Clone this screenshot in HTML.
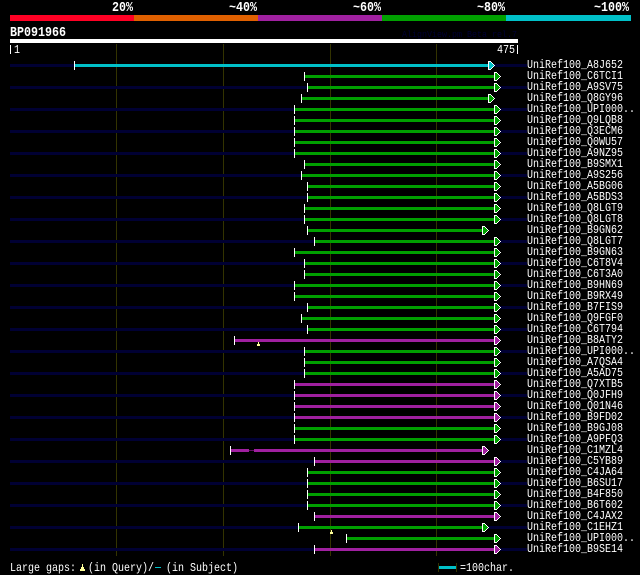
<!DOCTYPE html>
<html><head><meta charset="utf-8"><style>
html,body{margin:0;padding:0;background:#000;width:640px;height:575px;overflow:hidden}
svg{display:block}
text{font-family:"Liberation Mono","DejaVu Sans Mono",monospace;font-size:12px;fill:#fff}
.h{font-size:13.5px;font-weight:bold}
.g{fill:#00a000}.p{fill:#a020a0}.c{fill:#00c0c8}.b{fill:#000033}.o{fill:#333300}.w{fill:#fff}.y{fill:#ffff99}
</style></head><body>
<svg width="640" height="575" viewBox="0 0 640 575" shape-rendering="crispEdges">
<defs>
<g id="as" fill="#fff"><rect x="0" y="-4" width="1" height="9"/><rect x="1" y="-4" width="1" height="9"/><rect x="2" y="-4" width="1" height="9"/><rect x="3" y="-3" width="1" height="7"/><rect x="4" y="-2" width="1" height="5"/><rect x="5" y="-1" width="1" height="3"/><rect x="6" y="0" width="1" height="1"/></g>
<g id="ai"><rect x="1" y="-3" width="1" height="7"/><rect x="2" y="-3" width="1" height="7"/><rect x="3" y="-2" width="1" height="5"/><rect x="4" y="-1" width="1" height="3"/><rect x="5" y="0" width="1" height="1"/></g>
<g id="ag"><use href="#as"/><use href="#ai" fill="#00a000"/></g>
<g id="ap"><use href="#as"/><use href="#ai" fill="#a020a0"/></g>
<g id="ac"><use href="#as"/><use href="#ai" fill="#00c0c8"/></g>
</defs>
<rect x="0" y="0" width="640" height="575" fill="#000"/>
<rect x="10" y="15" width="124" height="6" fill="#ff0024"/>
<rect x="134" y="15" width="124" height="6" fill="#e06000"/>
<rect x="258" y="15" width="124" height="6" fill="#a020a0"/>
<rect x="382" y="15" width="124" height="6" fill="#00a000"/>
<rect x="506" y="15" width="125" height="6" fill="#00c0c8"/>
<text class="h" x="112" y="11" textLength="21" lengthAdjust="spacingAndGlyphs">20%</text>
<text class="h" x="229" y="11" textLength="28" lengthAdjust="spacingAndGlyphs">~40%</text>
<text class="h" x="353" y="11" textLength="28" lengthAdjust="spacingAndGlyphs">~60%</text>
<text class="h" x="477" y="11" textLength="28" lengthAdjust="spacingAndGlyphs">~80%</text>
<text class="h" x="594" y="11" textLength="35" lengthAdjust="spacingAndGlyphs">~100%</text>
<text class="h" x="10" y="36" textLength="56" lengthAdjust="spacingAndGlyphs">BP091966</text>
<text x="402" y="37" style="fill:#000033;font-size:9.5px" textLength="115" lengthAdjust="spacingAndGlyphs">AlignView.pm Beta rel.7</text>
<rect x="10" y="39" width="508" height="4" class="w"/>
<rect x="10" y="45" width="1" height="9" class="w"/>
<rect x="517" y="45" width="1" height="9" class="w"/>
<text x="14" y="53" textLength="6" lengthAdjust="spacingAndGlyphs">1</text>
<text x="497" y="53" textLength="18" lengthAdjust="spacingAndGlyphs">475</text>
<rect x="116" y="44" width="1" height="512" class="o"/>
<rect x="223" y="44" width="1" height="512" class="o"/>
<rect x="330" y="44" width="1" height="512" class="o"/>
<rect x="436" y="44" width="1" height="512" class="o"/>

<rect x="10" y="64" width="517" height="3" class="b"/>
<rect x="10" y="86" width="517" height="3" class="b"/>
<rect x="10" y="108" width="517" height="3" class="b"/>
<rect x="10" y="130" width="517" height="3" class="b"/>
<rect x="10" y="152" width="517" height="3" class="b"/>
<rect x="10" y="174" width="517" height="3" class="b"/>
<rect x="10" y="196" width="517" height="3" class="b"/>
<rect x="10" y="218" width="517" height="3" class="b"/>
<rect x="10" y="240" width="517" height="3" class="b"/>
<rect x="10" y="262" width="517" height="3" class="b"/>
<rect x="10" y="284" width="517" height="3" class="b"/>
<rect x="10" y="306" width="517" height="3" class="b"/>
<rect x="10" y="328" width="517" height="3" class="b"/>
<rect x="10" y="350" width="517" height="3" class="b"/>
<rect x="10" y="372" width="517" height="3" class="b"/>
<rect x="10" y="394" width="517" height="3" class="b"/>
<rect x="10" y="416" width="517" height="3" class="b"/>
<rect x="10" y="438" width="517" height="3" class="b"/>
<rect x="10" y="460" width="517" height="3" class="b"/>
<rect x="10" y="482" width="517" height="3" class="b"/>
<rect x="10" y="504" width="517" height="3" class="b"/>
<rect x="10" y="526" width="517" height="3" class="b"/>
<rect x="10" y="548" width="517" height="3" class="b"/>

<rect x="74" y="64" width="414" height="3" class="c"/><rect x="74" y="61" width="1" height="9" class="w"/><use href="#ac" x="488" y="65"/>
<rect x="304" y="75" width="190" height="3" class="g"/><rect x="304" y="72" width="1" height="9" class="w"/><use href="#ag" x="494" y="76"/>
<rect x="307" y="86" width="187" height="3" class="g"/><rect x="307" y="83" width="1" height="9" class="w"/><use href="#ag" x="494" y="87"/>
<rect x="301" y="97" width="187" height="3" class="g"/><rect x="301" y="94" width="1" height="9" class="w"/><use href="#ag" x="488" y="98"/>
<rect x="294" y="108" width="200" height="3" class="g"/><rect x="294" y="105" width="1" height="9" class="w"/><use href="#ag" x="494" y="109"/>
<rect x="294" y="119" width="200" height="3" class="g"/><rect x="294" y="116" width="1" height="9" class="w"/><use href="#ag" x="494" y="120"/>
<rect x="294" y="130" width="200" height="3" class="g"/><rect x="294" y="127" width="1" height="9" class="w"/><use href="#ag" x="494" y="131"/>
<rect x="294" y="141" width="200" height="3" class="g"/><rect x="294" y="138" width="1" height="9" class="w"/><use href="#ag" x="494" y="142"/>
<rect x="294" y="152" width="200" height="3" class="g"/><rect x="294" y="149" width="1" height="9" class="w"/><use href="#ag" x="494" y="153"/>
<rect x="304" y="163" width="190" height="3" class="g"/><rect x="304" y="160" width="1" height="9" class="w"/><use href="#ag" x="494" y="164"/>
<rect x="301" y="174" width="193" height="3" class="g"/><rect x="301" y="171" width="1" height="9" class="w"/><use href="#ag" x="494" y="175"/>
<rect x="307" y="185" width="187" height="3" class="g"/><rect x="307" y="182" width="1" height="9" class="w"/><use href="#ag" x="494" y="186"/>
<rect x="307" y="196" width="187" height="3" class="g"/><rect x="307" y="193" width="1" height="9" class="w"/><use href="#ag" x="494" y="197"/>
<rect x="304" y="207" width="190" height="3" class="g"/><rect x="304" y="204" width="1" height="9" class="w"/><use href="#ag" x="494" y="208"/>
<rect x="304" y="218" width="190" height="3" class="g"/><rect x="304" y="215" width="1" height="9" class="w"/><use href="#ag" x="494" y="219"/>
<rect x="307" y="229" width="175" height="3" class="g"/><rect x="307" y="226" width="1" height="9" class="w"/><use href="#ag" x="482" y="230"/>
<rect x="314" y="240" width="180" height="3" class="g"/><rect x="314" y="237" width="1" height="9" class="w"/><use href="#ag" x="494" y="241"/>
<rect x="294" y="251" width="200" height="3" class="g"/><rect x="294" y="248" width="1" height="9" class="w"/><use href="#ag" x="494" y="252"/>
<rect x="304" y="262" width="190" height="3" class="g"/><rect x="304" y="259" width="1" height="9" class="w"/><use href="#ag" x="494" y="263"/>
<rect x="304" y="273" width="190" height="3" class="g"/><rect x="304" y="270" width="1" height="9" class="w"/><use href="#ag" x="494" y="274"/>
<rect x="294" y="284" width="200" height="3" class="g"/><rect x="294" y="281" width="1" height="9" class="w"/><use href="#ag" x="494" y="285"/>
<rect x="294" y="295" width="200" height="3" class="g"/><rect x="294" y="292" width="1" height="9" class="w"/><use href="#ag" x="494" y="296"/>
<rect x="307" y="306" width="187" height="3" class="g"/><rect x="307" y="303" width="1" height="9" class="w"/><use href="#ag" x="494" y="307"/>
<rect x="301" y="317" width="193" height="3" class="g"/><rect x="301" y="314" width="1" height="9" class="w"/><use href="#ag" x="494" y="318"/>
<rect x="307" y="328" width="187" height="3" class="g"/><rect x="307" y="325" width="1" height="9" class="w"/><use href="#ag" x="494" y="329"/>
<rect x="234" y="339" width="260" height="3" class="p"/><rect x="234" y="336" width="1" height="9" class="w"/><use href="#ap" x="494" y="340"/>
<rect x="258" y="342" width="1" height="2" class="y"/><rect x="257" y="344" width="3" height="2" class="y"/>
<rect x="304" y="350" width="190" height="3" class="g"/><rect x="304" y="347" width="1" height="9" class="w"/><use href="#ag" x="494" y="351"/>
<rect x="304" y="361" width="190" height="3" class="g"/><rect x="304" y="358" width="1" height="9" class="w"/><use href="#ag" x="494" y="362"/>
<rect x="304" y="372" width="190" height="3" class="g"/><rect x="304" y="369" width="1" height="9" class="w"/><use href="#ag" x="494" y="373"/>
<rect x="294" y="383" width="200" height="3" class="p"/><rect x="294" y="380" width="1" height="9" class="w"/><use href="#ap" x="494" y="384"/>
<rect x="294" y="394" width="200" height="3" class="p"/><rect x="294" y="391" width="1" height="9" class="w"/><use href="#ap" x="494" y="395"/>
<rect x="294" y="405" width="200" height="3" class="p"/><rect x="294" y="402" width="1" height="9" class="w"/><use href="#ap" x="494" y="406"/>
<rect x="294" y="416" width="200" height="3" class="p"/><rect x="294" y="413" width="1" height="9" class="w"/><use href="#ap" x="494" y="417"/>
<rect x="294" y="427" width="200" height="3" class="g"/><rect x="294" y="424" width="1" height="9" class="w"/><use href="#ag" x="494" y="428"/>
<rect x="294" y="438" width="200" height="3" class="g"/><rect x="294" y="435" width="1" height="9" class="w"/><use href="#ag" x="494" y="439"/>
<rect x="230" y="449" width="19" height="3" class="p"/><rect x="249" y="450" width="5" height="1" fill="#601060"/><rect x="254" y="449" width="228" height="3" class="p"/><rect x="230" y="446" width="1" height="9" class="w"/><use href="#ap" x="482" y="450"/>
<rect x="314" y="460" width="180" height="3" class="p"/><rect x="314" y="457" width="1" height="9" class="w"/><use href="#ap" x="494" y="461"/>
<rect x="307" y="471" width="187" height="3" class="g"/><rect x="307" y="468" width="1" height="9" class="w"/><use href="#ag" x="494" y="472"/>
<rect x="307" y="482" width="187" height="3" class="g"/><rect x="307" y="479" width="1" height="9" class="w"/><use href="#ag" x="494" y="483"/>
<rect x="307" y="493" width="187" height="3" class="g"/><rect x="307" y="490" width="1" height="9" class="w"/><use href="#ag" x="494" y="494"/>
<rect x="307" y="504" width="187" height="3" class="g"/><rect x="307" y="501" width="1" height="9" class="w"/><use href="#ag" x="494" y="505"/>
<rect x="314" y="515" width="180" height="3" class="p"/><rect x="314" y="512" width="1" height="9" class="w"/><use href="#ap" x="494" y="516"/>
<rect x="298" y="526" width="184" height="3" class="g"/><rect x="298" y="523" width="1" height="9" class="w"/><use href="#ag" x="482" y="527"/>
<rect x="331" y="530" width="1" height="2" class="y"/><rect x="330" y="532" width="3" height="2" class="y"/>
<rect x="346" y="537" width="148" height="3" class="g"/><rect x="346" y="534" width="1" height="9" class="w"/><use href="#ag" x="494" y="538"/>
<rect x="314" y="548" width="180" height="3" class="p"/><rect x="314" y="545" width="1" height="9" class="w"/><use href="#ap" x="494" y="549"/>

<text x="527" y="68" textLength="96" lengthAdjust="spacingAndGlyphs">UniRef100_A8J652</text>
<text x="527" y="79" textLength="96" lengthAdjust="spacingAndGlyphs">UniRef100_C6TCI1</text>
<text x="527" y="90" textLength="96" lengthAdjust="spacingAndGlyphs">UniRef100_A9SV75</text>
<text x="527" y="101" textLength="96" lengthAdjust="spacingAndGlyphs">UniRef100_Q8GY96</text>
<text x="527" y="112" textLength="108" lengthAdjust="spacingAndGlyphs">UniRef100_UPI000..</text>
<text x="527" y="123" textLength="96" lengthAdjust="spacingAndGlyphs">UniRef100_Q9LQB8</text>
<text x="527" y="134" textLength="96" lengthAdjust="spacingAndGlyphs">UniRef100_Q3ECM6</text>
<text x="527" y="145" textLength="96" lengthAdjust="spacingAndGlyphs">UniRef100_Q0WU57</text>
<text x="527" y="156" textLength="96" lengthAdjust="spacingAndGlyphs">UniRef100_A9NZ95</text>
<text x="527" y="167" textLength="96" lengthAdjust="spacingAndGlyphs">UniRef100_B9SMX1</text>
<text x="527" y="178" textLength="96" lengthAdjust="spacingAndGlyphs">UniRef100_A9S256</text>
<text x="527" y="189" textLength="96" lengthAdjust="spacingAndGlyphs">UniRef100_A5BG06</text>
<text x="527" y="200" textLength="96" lengthAdjust="spacingAndGlyphs">UniRef100_A5BDS3</text>
<text x="527" y="211" textLength="96" lengthAdjust="spacingAndGlyphs">UniRef100_Q8LGT9</text>
<text x="527" y="222" textLength="96" lengthAdjust="spacingAndGlyphs">UniRef100_Q8LGT8</text>
<text x="527" y="233" textLength="96" lengthAdjust="spacingAndGlyphs">UniRef100_B9GN62</text>
<text x="527" y="244" textLength="96" lengthAdjust="spacingAndGlyphs">UniRef100_Q8LGT7</text>
<text x="527" y="255" textLength="96" lengthAdjust="spacingAndGlyphs">UniRef100_B9GN63</text>
<text x="527" y="266" textLength="96" lengthAdjust="spacingAndGlyphs">UniRef100_C6T8V4</text>
<text x="527" y="277" textLength="96" lengthAdjust="spacingAndGlyphs">UniRef100_C6T3A0</text>
<text x="527" y="288" textLength="96" lengthAdjust="spacingAndGlyphs">UniRef100_B9HN69</text>
<text x="527" y="299" textLength="96" lengthAdjust="spacingAndGlyphs">UniRef100_B9RX49</text>
<text x="527" y="310" textLength="96" lengthAdjust="spacingAndGlyphs">UniRef100_B7FIS9</text>
<text x="527" y="321" textLength="96" lengthAdjust="spacingAndGlyphs">UniRef100_Q9FGF0</text>
<text x="527" y="332" textLength="96" lengthAdjust="spacingAndGlyphs">UniRef100_C6T794</text>
<text x="527" y="343" textLength="96" lengthAdjust="spacingAndGlyphs">UniRef100_B8ATY2</text>
<text x="527" y="354" textLength="108" lengthAdjust="spacingAndGlyphs">UniRef100_UPI000..</text>
<text x="527" y="365" textLength="96" lengthAdjust="spacingAndGlyphs">UniRef100_A7QSA4</text>
<text x="527" y="376" textLength="96" lengthAdjust="spacingAndGlyphs">UniRef100_A5AD75</text>
<text x="527" y="387" textLength="96" lengthAdjust="spacingAndGlyphs">UniRef100_Q7XTB5</text>
<text x="527" y="398" textLength="96" lengthAdjust="spacingAndGlyphs">UniRef100_Q0JFH9</text>
<text x="527" y="409" textLength="96" lengthAdjust="spacingAndGlyphs">UniRef100_Q01N46</text>
<text x="527" y="420" textLength="96" lengthAdjust="spacingAndGlyphs">UniRef100_B9FD02</text>
<text x="527" y="431" textLength="96" lengthAdjust="spacingAndGlyphs">UniRef100_B9GJ08</text>
<text x="527" y="442" textLength="96" lengthAdjust="spacingAndGlyphs">UniRef100_A9PFQ3</text>
<text x="527" y="453" textLength="96" lengthAdjust="spacingAndGlyphs">UniRef100_C1MZL4</text>
<text x="527" y="464" textLength="96" lengthAdjust="spacingAndGlyphs">UniRef100_C5YB89</text>
<text x="527" y="475" textLength="96" lengthAdjust="spacingAndGlyphs">UniRef100_C4JA64</text>
<text x="527" y="486" textLength="96" lengthAdjust="spacingAndGlyphs">UniRef100_B6SU17</text>
<text x="527" y="497" textLength="96" lengthAdjust="spacingAndGlyphs">UniRef100_B4F850</text>
<text x="527" y="508" textLength="96" lengthAdjust="spacingAndGlyphs">UniRef100_B6T602</text>
<text x="527" y="519" textLength="96" lengthAdjust="spacingAndGlyphs">UniRef100_C4JAX2</text>
<text x="527" y="530" textLength="96" lengthAdjust="spacingAndGlyphs">UniRef100_C1EHZ1</text>
<text x="527" y="541" textLength="108" lengthAdjust="spacingAndGlyphs">UniRef100_UPI000..</text>
<text x="527" y="552" textLength="96" lengthAdjust="spacingAndGlyphs">UniRef100_B9SE14</text>

<text x="10" y="571" textLength="66" lengthAdjust="spacingAndGlyphs">Large gaps:</text>
<rect x="82" y="564" width="1" height="3" class="y"/><rect x="81" y="567" width="3" height="2" class="y"/><rect x="80" y="569" width="5" height="2" class="y"/>
<text x="88" y="571" textLength="66" lengthAdjust="spacingAndGlyphs">(in Query)/</text>
<rect x="155" y="567" width="6" height="1" class="c"/>
<text x="166" y="571" textLength="72" lengthAdjust="spacingAndGlyphs">(in Subject)</text>
<rect x="438" y="563" width="1" height="9" class="o"/>
<rect x="456" y="563" width="1" height="9" class="o"/>
<rect x="439" y="566" width="17" height="3" class="c"/>
<text x="460" y="571" textLength="54" lengthAdjust="spacingAndGlyphs">=100char.</text>
</svg>
</body></html>
